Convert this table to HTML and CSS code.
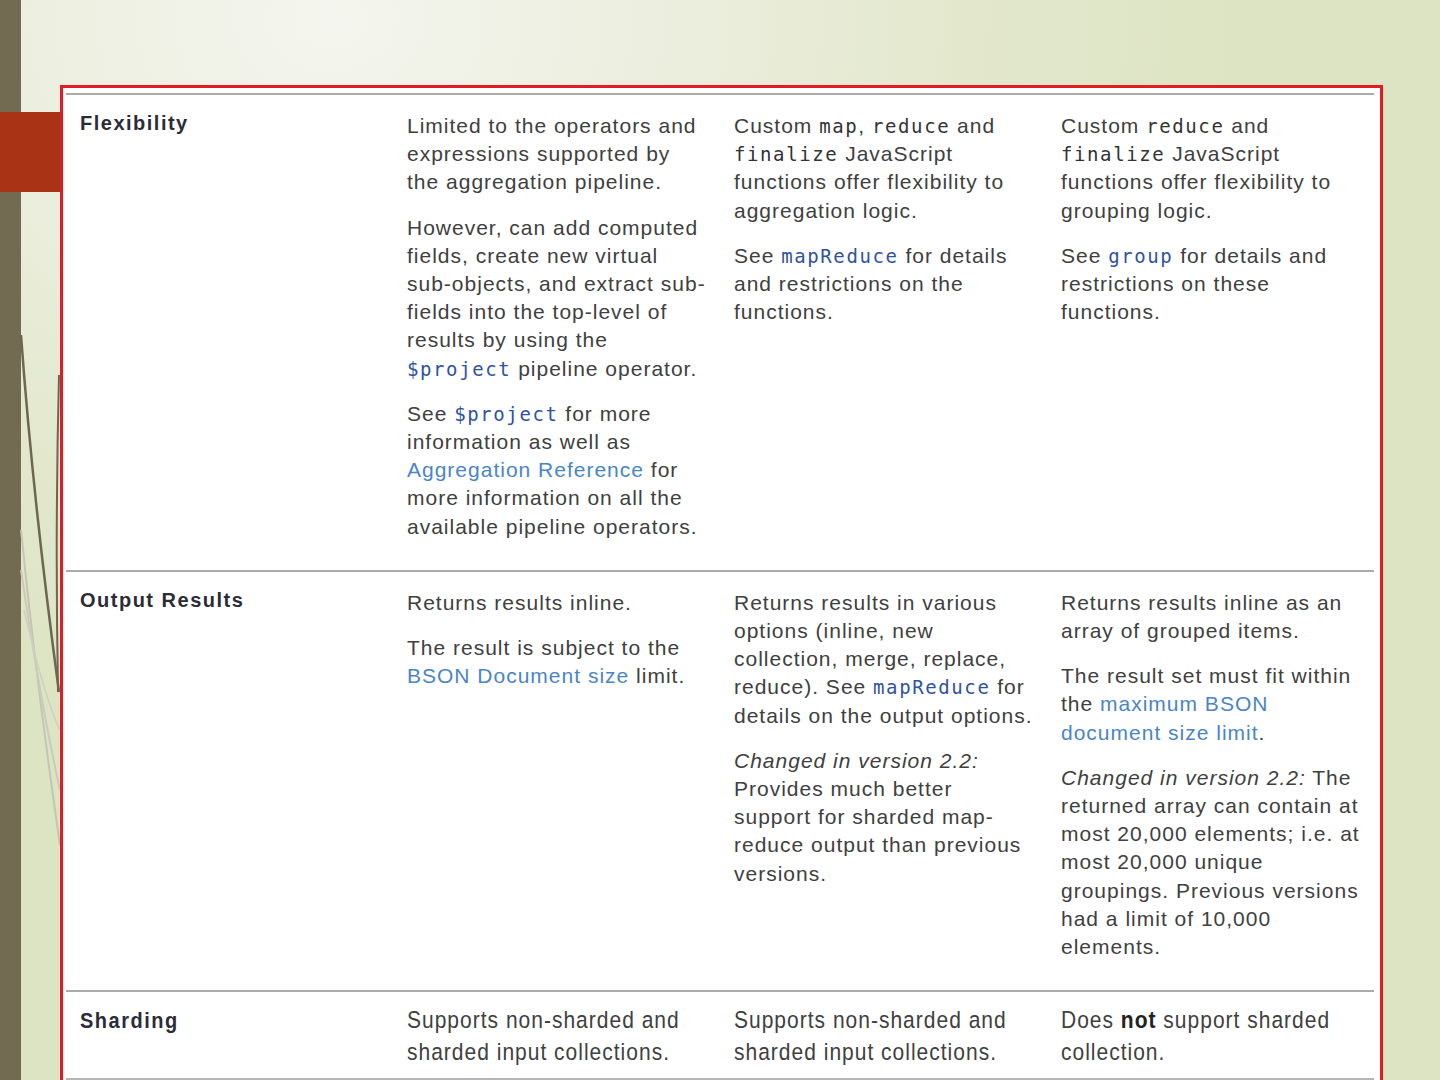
FILE: index.html
```html
<!DOCTYPE html>
<html>
<head>
<meta charset="utf-8">
<link rel="stylesheet" href="styles.css">
</head>
<body>
<div class="slide">
  <svg class="deco" width="60" height="1080" viewBox="0 0 60 1080">
    <rect x="0" y="0" width="21" height="1080" fill="#726a51"/>
    <path d="M21,530 Q36,680 60,845" stroke="#c4c5b2" stroke-width="2" fill="none"/>
    <path d="M21,570 Q40,700 60,790" stroke="#cacbb9" stroke-width="2" fill="none"/>
    <path d="M24,610 Q45,700 60,730" stroke="#cfd0bf" stroke-width="1.5" fill="none"/>
    <path d="M21,335 Q33,500 59,692" stroke="#6d6650" stroke-width="2.5" fill="none"/>
    <path d="M59,375 Q55,530 58,692" stroke="#6d6650" stroke-width="2" fill="none"/>
    <rect x="0" y="112" width="60" height="80" fill="#a83315"/>
  </svg>
  <div class="main">
    <div class="box">
      <div class="row">
        <div class="label">Flexibility</div>
        <div class="cell">
          <p>Limited to the operators and<br>expressions supported by<br>the aggregation pipeline.</p>
          <p>However, can add computed<br>fields, create new virtual<br>sub-objects, and extract sub-<br>fields into the top-level of<br>results by using the<br><code class="lcode">$project</code> pipeline operator.</p>
          <p>See <code class="lcode">$project</code> for more<br>information as well as<br><a class="link">Aggregation Reference</a> for<br>more information on all the<br>available pipeline operators.</p>
        </div>
        <div class="cell">
          <p>Custom <code>map</code>, <code>reduce</code> and<br><code>finalize</code> JavaScript<br>functions offer flexibility to<br>aggregation logic.</p>
          <p>See <code class="lcode">mapReduce</code> for details<br>and restrictions on the<br>functions.</p>
        </div>
        <div class="cell">
          <p>Custom <code>reduce</code> and<br><code>finalize</code> JavaScript<br>functions offer flexibility to<br>grouping logic.</p>
          <p>See <code class="lcode">group</code> for details and<br>restrictions on these<br>functions.</p>
        </div>
      </div>
      <div class="row">
        <div class="label">Output Results</div>
        <div class="cell">
          <p>Returns results inline.</p>
          <p>The result is subject to the<br><a class="link">BSON Document size</a> limit.</p>
        </div>
        <div class="cell">
          <p>Returns results in various<br>options (inline, new<br>collection, merge, replace,<br>reduce). See <code class="lcode">mapReduce</code> for<br>details on the output options.</p>
          <p><em>Changed in version 2.2:</em><br>Provides much better<br>support for sharded map-<br>reduce output than previous<br>versions.</p>
        </div>
        <div class="cell">
          <p>Returns results inline as an<br>array of grouped items.</p>
          <p>The result set must fit within<br>the <a class="link">maximum BSON<br>document size limit</a>.</p>
          <p><em>Changed in version 2.2:</em> The<br>returned array can contain at<br>most 20,000 elements; i.e. at<br>most 20,000 unique<br>groupings. Previous versions<br>had a limit of 10,000<br>elements.</p>
        </div>
      </div>
      <div class="row row-tall">
        <div class="label"><span class="tall">Sharding</span></div>
        <div class="cell">
          <p class="tall">Supports non-sharded and<br>sharded input collections.</p>
        </div>
        <div class="cell">
          <p class="tall">Supports non-sharded and<br>sharded input collections.</p>
        </div>
        <div class="cell">
          <p class="tall">Does <b>not</b> support sharded<br>collection.</p>
        </div>
      </div>
    </div>
  </div>
</div>
</body>
</html>
```
FILE: styles.css
```css
html, body {
  margin: 0;
  padding: 0;
}
body {
  width: 1440px;
  height: 1080px;
  overflow: hidden;
  font-family: "Liberation Sans", Arial, sans-serif;
}
.slide {
  width: 1440px;
  height: 1080px;
  display: flex;
  overflow: hidden;
  background: radial-gradient(ellipse 900px 700px at 330px 20px, #f4f5ee 0%, #ecefdf 35%, #e3e8cd 70%, #dde4c3 100%);
}
.deco {
  display: block;
  flex: none;
}
.main {
  flex: none;
  padding-top: 85px;
}
.box {
  width: 1308px;
  height: 1100px;
  border: 3px solid #e31b23;
  background: #ffffff;
  padding: 5px 6px 0 3px;
}
.row {
  display: grid;
  grid-template-columns: 327px 327px 327px 327px;
  border-top: 2px solid #ababab;
  padding: 17px 0 29px;
  color: #404040;
  font-size: 21px;
  line-height: 28.2px;
  letter-spacing: 1px;
}
.row-tall {
  padding: 12px 0 16px;
  border-bottom: 2px solid #b5b5b5;
}
.label {
  padding: 0 0 0 14px;
  margin-top: -3px;
  font-size: 20px;
  font-weight: bold;
  letter-spacing: 1.5px;
  color: #2c2c38;
}
.row-tall .label {
  margin-top: 1px;
}
.cell {
  padding: 0 0 0 14px;
}
.cell p {
  margin: 0;
  white-space: nowrap;
}
.cell p + p {
  margin-top: 17px;
}
code {
  font-family: "DejaVu Sans Mono", "Liberation Mono", monospace;
  font-size: 19px;
  letter-spacing: 1.6px;
  color: #333333;
}
code.lcode {
  color: #2f52a3;
}
.link {
  color: #4a85c7;
}
em {
  font-style: italic;
}
b {
  color: #222222;
}
.tall {
  display: inline-block;
  line-height: 29px;
  transform: scaleY(1.1);
  transform-origin: top left;
}
.cell p.tall {
  display: block;
}
```
